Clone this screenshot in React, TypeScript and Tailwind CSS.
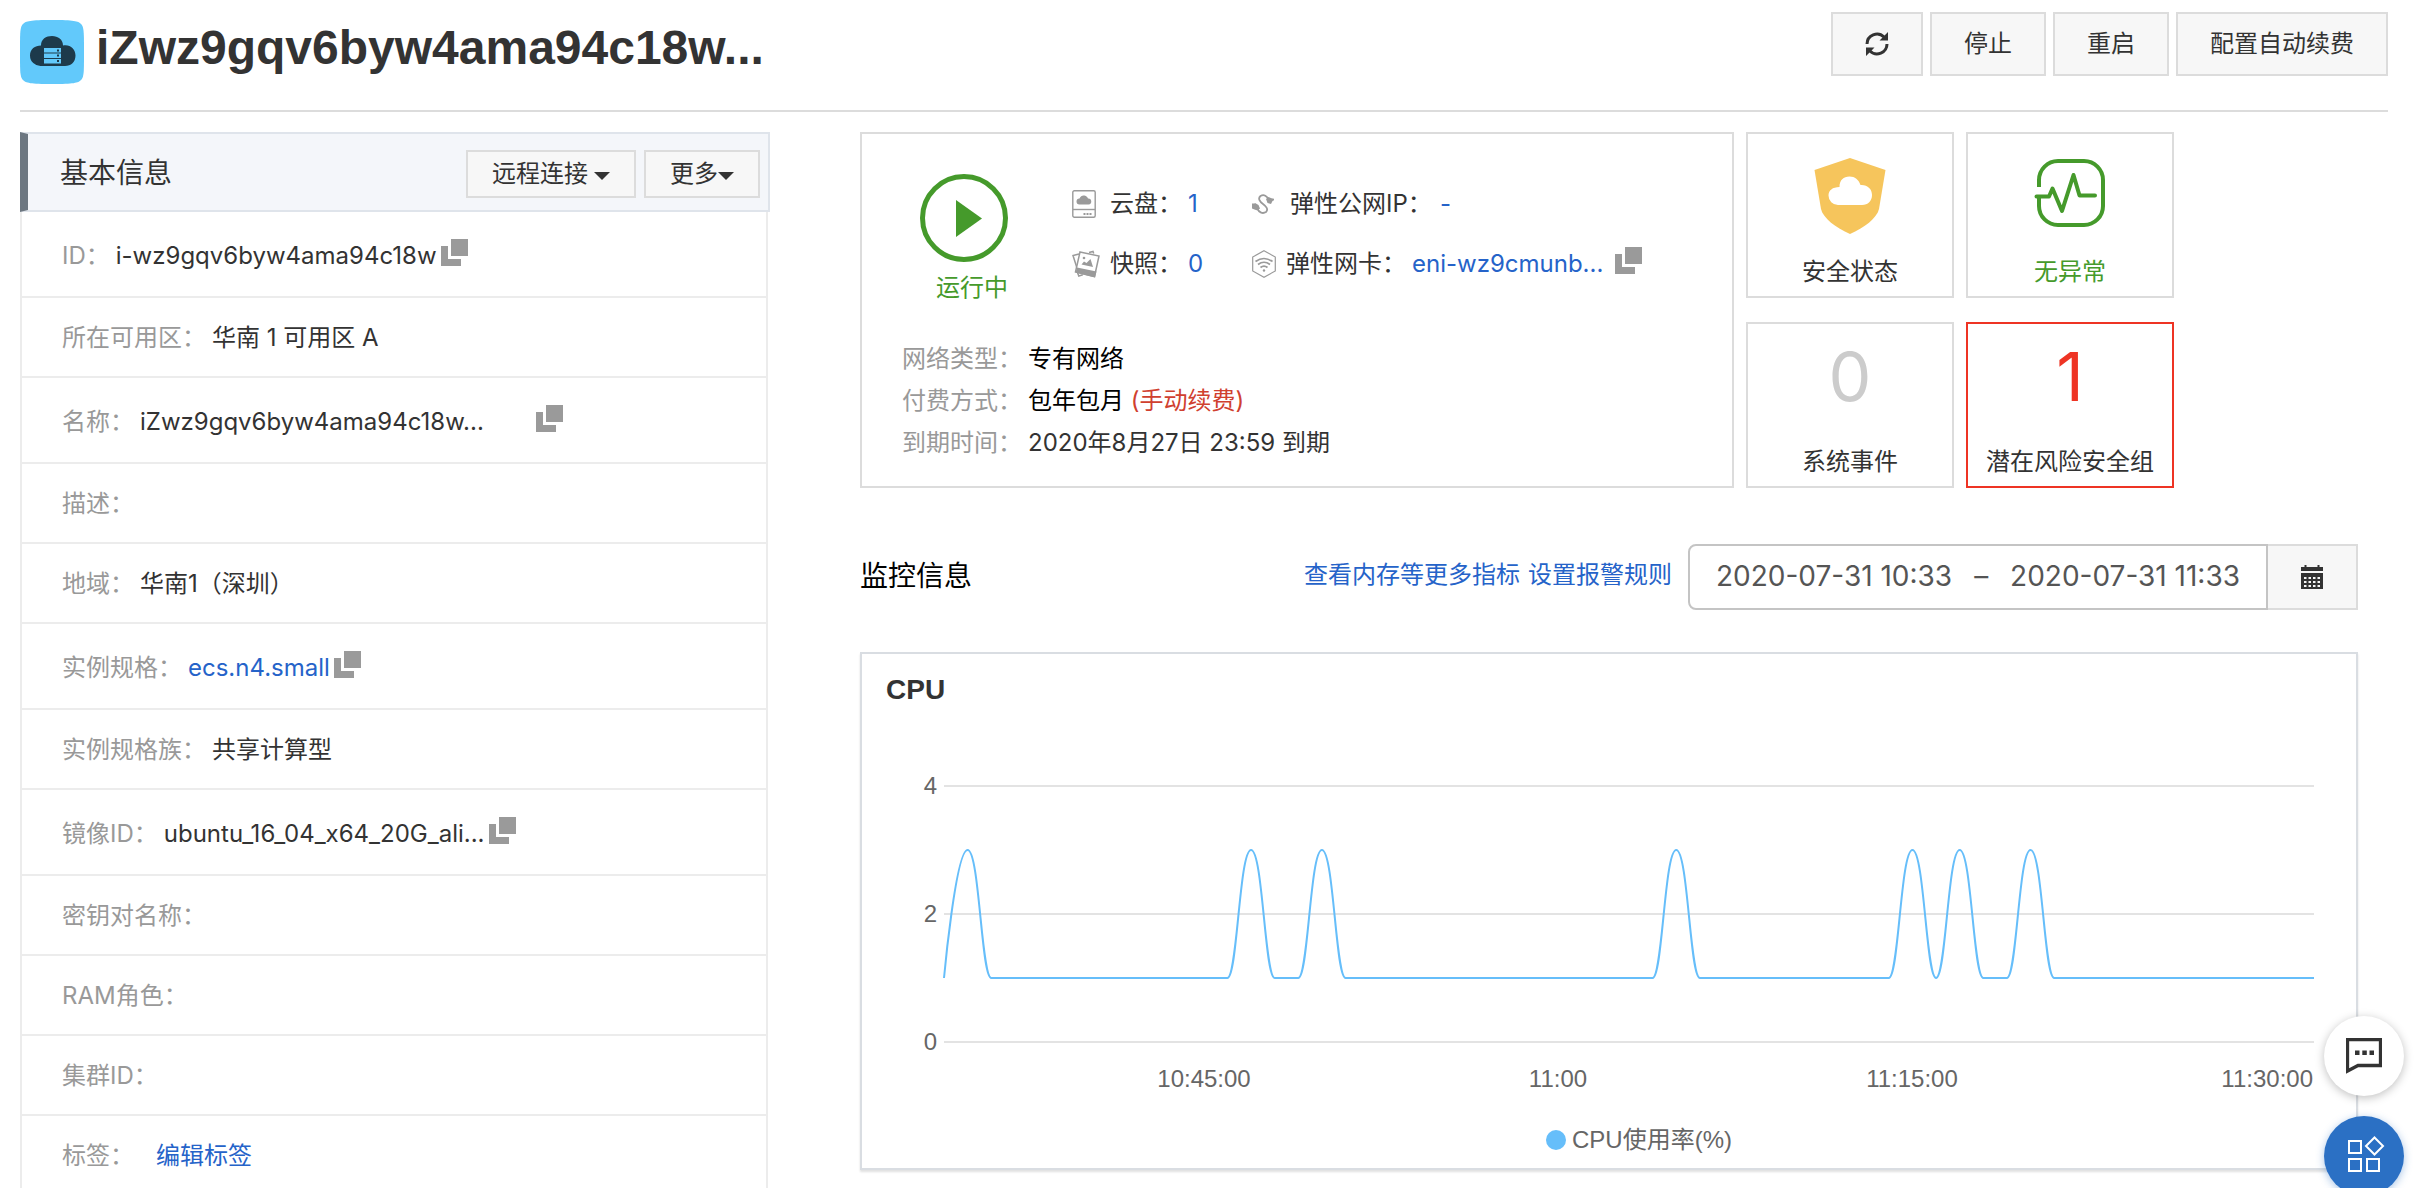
import React from "react";

type IconProps = { className?: string };

const LINK = "text-[#2563c9]";

function LogoIcon() {
  return (
    <svg viewBox="0 0 64 64" className="h-16 w-16 shrink-0" aria-hidden="true">
      <path
        d="M32 0C54 0 58 1 61 4S64 12 64 32s0 25-3 28-7 4-29 4-26-1-29-4-3-8-3-28S0 7 3 4 10 0 32 0Z"
        fill="#62c9fb"
      />
      <path
        d="M21 46A10.500 10.500 0 0 1 10 35.500C10 29 15 25.500 21 25.500 21 19 26 16 32 16s11 3.500 11 9.500C50 24 55.500 29 55.500 35.500S51 46 45 46Z"
        fill="#1d3a4b"
      />
      <path d="M24 28h17v4.500H24zM24 33.500h17V38H24zM24 39h17v4.500H24z" fill="#62c9fb" />
      <path d="M37 29.500h2v2h-2zM37 34.500h2v2h-2zM37 40h2v2h-2z" fill="#1d3a4b" />
    </svg>
  );
}

function CopyIcon({ className = "" }: IconProps) {
  return (
    <svg viewBox="0 0 27 27" className={`h-[27px] w-[27px] ${className}`} aria-hidden="true" fill="#9a9a9a">
      <path d="M10 0h17v17H10z" />
      <path d="M0 7h7v13h13v7H0z" />
    </svg>
  );
}

function Caret() {
  return (
    <svg viewBox="0 0 16 8" className="mt-1 h-2 w-4" aria-hidden="true">
      <path d="M0 0h16L8 8Z" fill="#333" />
    </svg>
  );
}

function RefreshIcon() {
  return (
    <svg viewBox="0 0 24 24" className="h-6 w-6" aria-hidden="true">
      <path d="M2 12A10 10 0 0 1 19 5M22 12A10 10 0 0 1 5 19" fill="none" stroke="#333" strokeWidth="3" />
      <path d="M23 0v8.500h-8.500ZM1 24v-8.500h8.500Z" fill="#333" />
    </svg>
  );
}

function PlayIcon() {
  return (
    <svg viewBox="0 0 88 88" className="h-[88px] w-[88px]" aria-hidden="true">
      <circle cx="44" cy="44" r="41.500" fill="none" stroke="#459a2b" strokeWidth="5" />
      <path d="M36 26v37l26-18.500Z" fill="#459a2b" />
    </svg>
  );
}

function DiskIcon() {
  return (
    <svg viewBox="0 0 24 28" className="h-7 w-6" aria-hidden="true">
      <rect x="0.800" y="0.800" width="22.400" height="26.400" rx="1.500" fill="none" stroke="#9a9a9a" strokeWidth="1.400" />
      <path d="M1 19.500h22" stroke="#9a9a9a" strokeWidth="1.400" />
      <path d="M7.500 14.500a3 3 0 0 1 0-6C8.500 6 10.500 5 12.500 5.500s3 1.500 3.500 3a3 3 0 0 1 .5 6Z" fill="#9a9a9a" />
      <path d="M11.500 23h2v2h-2zM14.500 23h2v2h-2zM17.500 23h2v2h-2z" fill="#9a9a9a" />
    </svg>
  );
}

function SnapshotIcon() {
  return (
    <svg viewBox="0 0 28 28" className="h-7 w-7" aria-hidden="true">
      <path d="M7 4 1 5.500 5 18M17 2.500l4-1 .7 2M5.500 22.500l1.300 3.500 4-1.200" fill="none" stroke="#9a9a9a" strokeWidth="1.500" />
      <path d="m8 2 19 4-4.500 20.500L3.500 22Z" fill="#fff" stroke="#9a9a9a" strokeWidth="1.500" />
      <path d="m5 17.500 19.500 4-1.500 6-19.500-5Z" fill="#9a9a9a" />
      <path d="m9.500 14.500 2.500-3 2.500 1.500 4-4 2.500 8Z" fill="#9a9a9a" />
      <circle cx="12" cy="8" r="1.300" fill="#9a9a9a" />
    </svg>
  );
}

function CableIcon() {
  return (
    <svg viewBox="0 0 22 20" className="h-5 w-[22px]" aria-hidden="true">
      <path
        d="M5 14C7 19 11 20 14 18 17 15 13.500 12 11 10 8 8 5.500 4.500 8.500 2 12 0 15 2 17 6"
        fill="none"
        stroke="#9a9a9a"
        strokeWidth="1.800"
      />
      <path d="m14 5 2.500-2 3 1.200 2.500.5v1.500l-1.500.8-1.500 3-3.500-1Z" fill="#9a9a9a" />
      <path d="m8 14.500-2.500 2-3-1L0 14.500V9.500h2.500L3 9l3.500 2Z" fill="#9a9a9a" />
    </svg>
  );
}

function NicIcon() {
  return (
    <svg viewBox="0 0 24 28" className="h-7 w-6" aria-hidden="true" fill="none" stroke="#9a9a9a">
      <path d="M12 .8 23.300 7v14L12 27.200.7 21V7Z" strokeWidth="1.200" />
      <path d="M3.500 11.500q8.500-6 17 0M6 14.500q6-4.500 12 0M8.500 17.500q3.500-2.800 7 0" strokeWidth="1.700" />
      <circle cx="12" cy="20.500" r="1.200" fill="#9a9a9a" stroke="none" />
    </svg>
  );
}

function ShieldIcon() {
  return (
    <svg viewBox="0 0 72 76" className="h-[76px] w-[72px]" aria-hidden="true">
      <path d="M36 0 71.500 12 65 51c-2 9-15 19-29 25C22 70 9 60 7 51L.5 12Z" fill="#f6c55c" />
      <path
        d="M24 47a9.500 9.500 0 0 1-9.500-9.500c0-5 4-8.500 11-8.500 0-7 4-10.500 10-10.500 5.500 0 9 3 11 8.500 7-.5 11.500 4 11.500 10S54 47 48 47Z"
        fill="#fff"
      />
    </svg>
  );
}

function PulseIcon() {
  return (
    <svg viewBox="0 0 72 70" className="h-[70px] w-[72px]" aria-hidden="true" fill="none" stroke="#459a2b" strokeWidth="4">
      <path d="M5 29V22A19 19 0 0 1 24 3H50A19 19 0 0 1 69 22V48A19 19 0 0 1 50 67H24A19 19 0 0 1 5 48V38" />
      <path d="M2.500 38.500H15L18.500 30.500 28 53 39.500 17 45.500 37.500H61" strokeLinecap="round" strokeLinejoin="round" />
    </svg>
  );
}

function CalendarIcon() {
  return (
    <svg viewBox="0 0 22 24" className="h-6 w-[22px]" aria-hidden="true">
      <path d="M0 2h3.500V0h2v2h11V0h2v2H22v4H0zM0 8h22v16H0z" fill="#333" />
      <path
        d="M3 12h2.500v2H3zM7.500 12H10v2H7.500zM12 12h2.500v2H12zM16.500 12H19v2h-2.500zM3 16h2.500v2H3zM7.500 16H10v2H7.500zM12 16h2.500v2H12zM16.500 16H19v2h-2.500zM3 20h2.500v2H3zM7.500 20H10v2H7.500zM12 20h2.500v2H12zM16.500 20H19v2h-2.500z"
        fill="#f7f7f7"
      />
    </svg>
  );
}

function ChatIcon() {
  return (
    <svg viewBox="0 0 36 36" className="h-9 w-9" aria-hidden="true">
      <path d="M1.500 1.500h33v26H12L1.500 33Z" fill="none" stroke="#333" strokeWidth="3.300" />
      <path d="M9 12.500h4.500V17H9zM16.300 12.500h4.500V17h-4.500zM23.500 12.500H28V17h-4.500z" fill="#333" />
    </svg>
  );
}

function AppsIcon() {
  return (
    <svg viewBox="0 0 32 36" className="h-9 w-8 overflow-visible" aria-hidden="true" fill="none" stroke="#fff" strokeWidth="2">
      <path d="M1 5h12v12H1zM1 23h12v12H1zM19 23h12v12H19zM26.500 1.500l8.500 8.500-8.500 8.500L18 10Z" />
    </svg>
  );
}

const BTN = "flex items-center justify-center border-2 border-[#dcdcdc] bg-[#f7f7f7] text-2xl text-[#333]";

function Header() {
  return (
    <header className="flex h-28 items-start justify-between border-b-2 border-[#dcdcdc]">
      <div className="flex items-center gap-3 pt-5">
        <LogoIcon />
        <h1 className="-mt-2 font-['Liberation_Sans'] text-5xl leading-[56px] font-bold text-[#333]">
          iZwz9gqv6byw4ama94c18w...
        </h1>
      </div>
      <div className="flex gap-[7px] pt-3">
        <button type="button" aria-label="刷新" className={`${BTN} h-16 px-8`}>
          <RefreshIcon />
        </button>
        <button type="button" className={`${BTN} h-16 px-8`}>停止</button>
        <button type="button" className={`${BTN} h-16 px-8`}>重启</button>
        <button type="button" className={`${BTN} h-16 px-8`}>配置自动续费</button>
      </div>
    </header>
  );
}

type Row = { label: string; value?: string; link?: boolean; copy?: boolean; tall?: boolean; gap?: "wide" | "far" };

const ROWS: Row[] = [
  { label: "ID：", value: "i-wz9gqv6byw4ama94c18w", copy: true, tall: true },
  { label: "所在可用区：", value: "华南 1 可用区 A" },
  { label: "名称：", value: "iZwz9gqv6byw4ama94c18w...", copy: true, tall: true, gap: "far" },
  { label: "描述：" },
  { label: "地域：", value: "华南1（深圳）" },
  { label: "实例规格：", value: "ecs.n4.small", link: true, copy: true, tall: true },
  { label: "实例规格族：", value: "共享计算型" },
  { label: "镜像ID：", value: "ubuntu_16_04_x64_20G_ali...", copy: true, tall: true },
  { label: "密钥对名称：" },
  { label: "RAM角色：" },
  { label: "集群ID：" },
  { label: "标签：", value: "编辑标签", link: true, gap: "wide" },
];

function BasicInfo() {
  return (
    <section className="w-[750px] shrink-0">
      <div className="flex h-20 items-center border-2 border-l-8 border-[#dfe4eb] border-l-[#6d7781] bg-[#f4f6fa] pt-1 pr-2 pl-8">
        <h2 className="flex-1 pb-[2px] text-[28px] leading-9 text-[#333]">基本信息</h2>
        <div className="flex gap-2">
          <button type="button" className={`${BTN} h-12 gap-[6px] px-6`}>
            远程连接
            <Caret />
          </button>
          <button type="button" className={`${BTN} h-12 px-6`}>
            更多
            <Caret />
          </button>
        </div>
      </div>
      <dl className="mr-[2px] border-x-2 border-[#ececec]">
        {ROWS.map((r) => (
          <div
            key={r.label}
            className={`flex items-center border-b-2 border-[#ececec] pl-10 text-2xl ${r.tall ? "h-[86px] pt-1" : "h-20 pt-[2px]"}`}
          >
            <dt className="pr-[6px] text-[#999]">{r.label}</dt>
            <dd className={`flex items-center ${r.gap === "wide" ? "pl-4" : ""}`}>
              {r.link ? (
                <a href="#detail" className={LINK}>{r.value}</a>
              ) : (
                <span className="text-[#333]">{r.value}</span>
              )}
              {r.copy && (
                <button type="button" aria-label="复制" className={r.gap === "far" ? "ml-[52px]" : "ml-1"}>
                  <CopyIcon className="-mt-2" />
                </button>
              )}
            </dd>
          </div>
        ))}
      </dl>
    </section>
  );
}

function StatusCard() {
  return (
    <section className="max-w-[874px] flex-1 border-2 border-[#dcdcdc] px-10 pt-10">
      <div className="flex pl-[18px]">
        <div className="flex w-[88px] flex-col items-center">
          <PlayIcon />
          <span className="mt-[10px] ml-4 text-2xl whitespace-nowrap text-[#459a2b]">运行中</span>
        </div>
        <dl className="ml-16 grid grid-cols-[180px_auto] content-start gap-y-5 pt-[10px] text-2xl leading-10 text-[#333]">
          <div className="flex items-center">
            <span className="flex w-[38px]"><DiskIcon /></span>
            <dt className="w-[78px]">云盘：</dt>
            <dd><a href="#disk" className={LINK}>1</a></dd>
          </div>
          <div className="flex items-center">
            <span className="flex w-[38px]"><CableIcon /></span>
            <dt className="w-[150px]">弹性公网IP：</dt>
            <dd><a href="#eip" className={LINK}>-</a></dd>
          </div>
          <div className="flex items-center">
            <span className="flex w-[38px]"><SnapshotIcon /></span>
            <dt className="w-[78px]">快照：</dt>
            <dd><a href="#snapshot" className={LINK}>0</a></dd>
          </div>
          <div className="flex items-center">
            <span className="flex w-[34px]"><NicIcon /></span>
            <dt className="w-[126px]">弹性网卡：</dt>
            <dd className="flex items-center gap-3">
              <a href="#eni" className={LINK}>eni-wz9cmunb...</a>
              <button type="button" aria-label="复制"><CopyIcon className="-mt-2" /></button>
            </dd>
          </div>
        </dl>
      </div>
      <dl className="mt-[34px] grid grid-cols-[126px_1fr] text-2xl leading-[42px]">
        <dt className="text-[#999]">网络类型：</dt>
        <dd className="text-black">专有网络</dd>
        <dt className="text-[#999]">付费方式：</dt>
        <dd className="text-black">包年包月 <span className="text-[#d0402f]">(手动续费)</span></dd>
        <dt className="text-[#999]">到期时间：</dt>
        <dd className="text-[#333]">2020年8月27日 23:59 到期</dd>
      </dl>
    </section>
  );
}

function Tiles() {
  const tile = "flex h-[166px] flex-col items-center justify-between border-2 pb-[6px] text-2xl leading-9";
  return (
    <div className="grid grid-cols-[208px_208px] gap-x-3 gap-y-6">
      <div className={`${tile} border-[#dcdcdc] pt-6 text-[#333]`}>
        <ShieldIcon />
        安全状态
      </div>
      <div className={`${tile} border-[#dcdcdc] pt-6 text-[#459a2b]`}>
        <PulseIcon />
        无异常
      </div>
      <div className={`${tile} border-[#dcdcdc] pt-4 text-[#333]`}>
        <span className="text-[68px] leading-[72px] text-[#ccc]">0</span>
        系统事件
      </div>
      <div className={`${tile} border-[#ee3424] pt-4 text-[#333]`}>
        <span className="text-[68px] leading-[72px] text-[#ee3424]">1</span>
        潜在风险安全组
      </div>
    </div>
  );
}

const PEAKS = [1, 13, 16, 31, 41, 43, 46];
const LAST_MINUTE = 58;
const LEFT = 82;
const WIDTH = 1370;
const STEP = WIDTH / LAST_MINUTE;

const yOf = (v: number) => 332 - v * 64;

function cpuPath() {
  const valueAt = (m: number) => (PEAKS.includes(m) ? 3 : 1);
  const handle = (v: number) => (v === 3 ? STEP * 0.5 : STEP * 0.42);
  let d = `M${LEFT} ${yOf(1)}`;
  for (let m = 1; m <= LAST_MINUTE; m++) {
    const a = valueAt(m - 1);
    const b = valueAt(m);
    const x0 = LEFT + (m - 1) * STEP;
    const x1 = LEFT + m * STEP;
    if (m === 1) d += ` C${x0} ${yOf(a)} ${x1 - handle(b)} ${yOf(b)} ${x1} ${yOf(b)}`;
    else if (a === b) d += ` L${x1} ${yOf(b)}`;
    else d += ` C${x0 + handle(a)} ${yOf(a)} ${x1 - handle(b)} ${yOf(b)} ${x1} ${yOf(b)}`;
  }
  return d;
}

function CpuChart() {
  return (
    <section className="mt-[42px] border-2 border-[#d9dde2] pt-4 shadow-[0_2px_2px_rgba(0,0,0,0.12)]">
      <h3 className="pl-6 font-['Liberation_Sans'] text-[28px] leading-10 font-bold text-[#333]">CPU</h3>
      <svg viewBox="0 0 1494 390" className="block w-full" role="img" aria-label="CPU使用率">
        {[0, 2, 4].map((v) => (
          <g key={v}>
            <path d={`M${LEFT} ${yOf(v)}H${LEFT + WIDTH}`} stroke="#e3e3e3" strokeWidth="2" />
            <text x="75" y={yOf(v) + 8} textAnchor="end" className="fill-[#666] font-['Liberation_Sans'] text-2xl">{v}</text>
          </g>
        ))}
        <path d={cpuPath()} fill="none" stroke="#66befa" strokeWidth="2" />
        <g className="fill-[#666] font-['Liberation_Sans'] text-2xl">
          <text x="342" y="377" textAnchor="middle">10:45:00</text>
          <text x="696" y="377" textAnchor="middle">11:00</text>
          <text x="1050" y="377" textAnchor="middle">11:15:00</text>
          <text x="1451" y="377" textAnchor="end">11:30:00</text>
        </g>
      </svg>
      <div className="flex items-center justify-center gap-[6px] pt-[22px] pb-[10px] pl-[60px] font-['Liberation_Sans','Noto_Sans_CJK_SC',sans-serif] text-2xl leading-9 text-[#666]">
        <span className="h-5 w-5 rounded-full bg-[#66befa]" />
        CPU使用率(%)
      </div>
    </section>
  );
}

function Monitor() {
  return (
    <section>
      <div className="mt-14 flex items-center">
        <h2 className="flex-1 pb-[2px] text-[28px] leading-9 text-black">监控信息</h2>
        <div className={`mr-4 flex gap-2 pb-1 text-2xl ${LINK}`}>
          <a href="#metrics">查看内存等更多指标</a>
          <a href="#alarm">设置报警规则</a>
        </div>
        <div className="flex h-[66px] w-[580px] items-center justify-between rounded-l-lg border-2 border-[#c4c4c4] px-[26px] pb-[2px] text-[28px] text-[#555]">
          <span>2020-07-31 10:33</span>
          <span>–</span>
          <span>2020-07-31 11:33</span>
        </div>
        <button type="button" aria-label="选择时间" className="flex h-[66px] w-[90px] items-center justify-center border-2 border-l-0 border-[#dcdcdc] bg-[#f7f7f7]">
          <CalendarIcon />
        </button>
      </div>
      <CpuChart />
    </section>
  );
}

export default function App() {
  return (
    <div className="min-h-screen bg-white pr-10 pl-5 font-[Inter,'Noto_Sans_CJK_SC',sans-serif]">
      <Header />
      <main className="flex items-start gap-[90px] pt-5">
        <BasicInfo />
        <div className="min-w-0 flex-1 pr-[30px]">
          <div className="flex gap-3">
            <StatusCard />
            <Tiles />
          </div>
          <Monitor />
        </div>
      </main>
      <div className="fixed right-6 -bottom-2 flex flex-col gap-5">
        <button type="button" aria-label="咨询" className="flex h-20 w-20 items-center justify-center rounded-full bg-white shadow-[0_2px_10px_rgba(0,0,0,0.25)]">
          <ChatIcon />
        </button>
        <button type="button" aria-label="应用" className="flex h-20 w-20 items-center justify-center rounded-full bg-[#2b70c4] pb-1 shadow-[0_2px_8px_rgba(43,112,196,0.4)]">
          <AppsIcon />
        </button>
      </div>
    </div>
  );
}
